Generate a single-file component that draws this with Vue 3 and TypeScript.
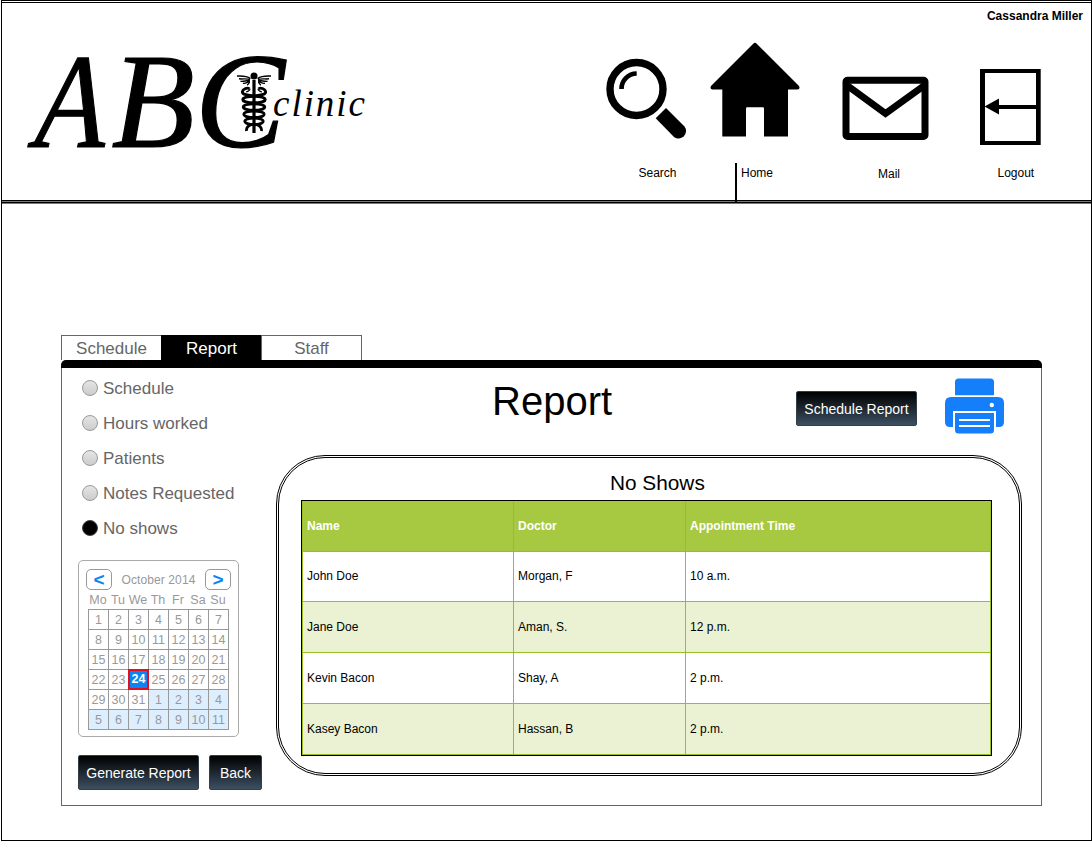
<script setup lang="ts">
import { ref } from 'vue'

interface Day { n: number; next: boolean }
interface Visit { name: string; doctor: string; time: string }

const tabs = ['Schedule', 'Report', 'Staff']
const activeTab = ref('Report')
const kinds = ['Schedule', 'Hours worked', 'Patients', 'Notes Requested', 'No shows']
const kind = ref('No shows')
const weekdays = ['Mo', 'Tu', 'We', 'Th', 'Fr', 'Sa', 'Su']
const days: Day[] = Array.from({ length: 42 }, (_, i) => ({
  n: i < 31 ? i + 1 : i - 30,
  next: i >= 31,
}))
const selected = ref(23)
const visits: Visit[] = [
  { name: 'John Doe', doctor: 'Morgan, F', time: '10 a.m.' },
  { name: 'Jane Doe', doctor: 'Aman, S.', time: '12 p.m.' },
  { name: 'Kevin Bacon', doctor: 'Shay, A', time: '2 p.m.' },
  { name: 'Kasey Bacon', doctor: 'Hassan, B', time: '2 p.m.' },
]
const coils = [
  { y: 99.5, r: 11.3 },
  { y: 107, r: 10.8 },
  { y: 114.3, r: 10.2 },
  { y: 121.3, r: 9.2 },
]
</script>

<template>
  <div class="page">
    <div class="frame">
      <header class="header">
        <svg class="logo" width="360" height="120" viewBox="20 40 360 120">
          <g class="serif">
            <g class="initials">
              <text transform="translate(34 147) skewX(-3) scale(.855 1)" font-size="135">A</text>
              <text transform="translate(111.500 147) scale(1.01 1)" font-size="135">B</text>
              <text transform="translate(195 147)" font-size="135">C</text>
            </g>
            <text x="273" y="115.5" font-size="37" textLength="92">clinic</text>
          </g>
          <circle cx="254" cy="76" r="3.5" />
          <path d="M254 80V133" stroke="#000" stroke-width="3.2" />
          <g fill="none" stroke="#000" stroke-width="1.4">
            <path d="M250.500 78.500C246 75.500 242 76.200 237 76M250 79.500C246 78.300 243 79.300 239 78.800M250 80.500C246 80 244 82 240.500 81.300M249.500 81.500C247.500 81.500 246 84 243 83.200M250 82C249 82 249 84.500 247 85" />
            <path d="M257.500 78.500C262 75.500 266 76.200 271 76M258 79.500C262 78.300 265 79.300 269 78.800M258 80.500C262 80 264 82 267.500 81.300M258.500 81.500C260.500 81.500 262 84 265 83.200M258 82C259 82 259 84.500 261 85" />
          </g>
          <g fill="none" stroke="#000" stroke-width="2.8">
            <path d="M249.500 88.800C247 87 242.500 89.500 242.300 91.800C242.500 95.500 250 95 254 96C258 95 265.500 95.500 265.700 91.800C265.500 89.500 261 87 258.500 88.800" />
            <path d="M246 92Q250 91 250 88.800M262 92Q258 91 258 88.800" stroke-width="1.200" />
            <ellipse v-for="c in coils" :key="c.y" cx="254" :cy="c.y" :rx="c.r" ry="3.200" />
            <path d="M252 124.500Q246 126 246.500 131M256 124.500Q262 126 261.500 131" />
          </g>
        </svg>

        <div class="right">
          <div class="user">Cassandra Miller</div>
          <nav class="nav">
            <a class="item search">
              <svg width="84" height="84" viewBox="604 57 84 84">
                <circle cx="636.500" cy="89" r="26.500" fill="none" stroke="#000" stroke-width="7.400" />
                <path d="M621.500 89A15.200 15.200 0 0 1 636.700 73.500" fill="none" stroke="#000" stroke-width="4.600" />
                <path d="M666 108L684.500 126.500A7.500 7.500 0 0 1 674 137L655.700 118.300Z" />
              </svg>
              <span>Search</span>
            </a>
            <a class="item home">
              <svg width="92" height="96" viewBox="709 42 92 96">
                <path d="M753.500 43.500Q755 42.200 756.500 43.500L799 86Q800.500 89.200 797.500 89.500H788V136.500H764V108.500Q764 107.300 763 107.300H747Q746 107.300 746 108.500V136.500H722.300V89.500H712.500Q709.500 89.200 711 86Z" />
              </svg>
              <span>Home</span>
            </a>
            <a class="item mail">
              <svg width="88" height="66" viewBox="841 76 88 66">
                <rect x="846" y="80.300" width="79" height="56.200" rx="1.500" fill="none" stroke="#000" stroke-width="7" />
                <path d="M846.500 85L885.500 113.500L925 85" fill="none" stroke="#000" stroke-width="7" />
              </svg>
              <span>Mail</span>
            </a>
            <a class="item logout">
              <svg width="62" height="78" viewBox="980 68 62 78">
                <path d="M980 69H1040.700V145H980ZM985 73V141H1036V73Z" fill-rule="evenodd" />
                <path d="M984.500 106.500L999 98.500V105H1037V109H999V114.500Z" />
              </svg>
              <span>Logout</span>
            </a>
          </nav>
        </div>
      </header>

      <main class="main">
        <div class="tabs">
          <button v-for="t in tabs" :key="t" class="tab" :class="{ active: t === activeTab }" @click="activeTab = t">{{ t }}</button>
        </div>
        <div class="bar"></div>
        <div class="panel">
          <aside class="side">
            <ul class="radios">
              <li v-for="k in kinds" :key="k" @click="kind = k">
                <i class="dot" :class="{ on: k === kind }"></i>{{ k }}
              </li>
            </ul>
            <div class="calendar">
              <div class="month">
                <button class="arrow">&lt;</button>
                <span>October 2014</span>
                <button class="arrow">&gt;</button>
              </div>
              <div class="week"><span v-for="w in weekdays" :key="w">{{ w }}</span></div>
              <div class="days">
                <span v-for="(d, i) in days" :key="i" :class="{ next: d.next, sel: i === selected }" @click="selected = i">{{ d.n }}</span>
              </div>
            </div>
            <div class="actions">
              <button class="btn wide">Generate Report</button>
              <button class="btn back">Back</button>
            </div>
          </aside>

          <section class="content">
            <div class="top">
              <h1>Report</h1>
              <button class="btn wide">Schedule Report</button>
              <svg class="printer" width="60" height="57" viewBox="945 378 60 57">
                <path d="M955 395.300V382Q955 378.500 958.500 378.500H990.500Q994 378.500 994 382V395.300Z" />
                <path fill-rule="evenodd" d="M951 397H998Q1004 397 1004 403V422Q1004 427 999 427H996V411H953V427H950Q945 427 945 422V403Q945 397 951 397ZM991.800 402.800A2.200 2.200 0 1 0 991.800 407.200A2.200 2.200 0 1 0 991.800 402.800Z" />
                <path fill-rule="evenodd" d="M955 413H994V430Q994 433.500 990.500 433.500H958.500Q955 433.500 955 430ZM959 419V421H990V419ZM959 425V427H990V425Z" />
              </svg>
            </div>
            <div class="card">
              <h2>No Shows</h2>
              <table>
                <colgroup><col class="c1" /><col class="c2" /><col class="c3" /></colgroup>
                <thead>
                  <tr><th>Name</th><th>Doctor</th><th>Appointment Time</th></tr>
                </thead>
                <tbody>
                  <tr v-for="v in visits" :key="v.name">
                    <td>{{ v.name }}</td><td>{{ v.doctor }}</td><td>{{ v.time }}</td>
                  </tr>
                </tbody>
              </table>
            </div>
          </section>
        </div>
      </main>
    </div>
  </div>
</template>

<style>
html, body { margin: 0; background: #fff; }
</style>

<style scoped>
* { box-sizing: border-box; }
button { font: inherit; margin: 0; padding: 0; }
.page { width: 1092px; height: 841px; padding-left: 1px; font-family: "Liberation Sans", Arial, sans-serif; color: #000; background: #fff; }
.frame { height: 841px; border: 1px solid #000; border-top: 3px double #000; }
.header { height: 201px; display: flex; justify-content: space-between; margin: 0 -1px; border: 1px solid #000; border-width: 0 1px; background: linear-gradient(#000, #000) 0 197px / 100% 1px no-repeat, linear-gradient(#777, #777) 0 198px / 100% 1px no-repeat, linear-gradient(#000, #000) 0 199px / 100% 1px no-repeat, linear-gradient(#777, #777) 0 200px / 100% 1px no-repeat; }
.logo { display: block; margin: 37px 0 0 18px; overflow: visible; }
.serif { font-family: "Liberation Serif", "Times New Roman", serif; font-style: italic; }
.initials { stroke: #000; stroke-width: 1.2px; }
.right { width: 488px; }
.user { height: 26px; padding: 5px 8px 0 0; text-align: right; font-size: 12px; line-height: 16px; font-weight: bold; }
.nav { display: flex; height: 175px; }
.item { display: flex; flex-direction: column; justify-content: space-between; }
.item svg { display: block; }
.item span { font-size: 12px; line-height: 16px; }
.search { width: 106px; padding: 28px 0 23px 1px; }
.search span { padding-left: 34.500px; }
.home { width: 132px; padding: 13px 0 2px; }
.home span { height: 39px; margin-left: 26px; padding: 2px 0 0 4px; border-left: 2px solid #000; }
.mail { width: 139px; padding: 47px 0 22px; }
.mail span { padding-left: 37px; }
.logout { width: 111px; padding: 39px 0 23px; }
.logout span { padding-left: 17.500px; }

.main { width: 981px; margin: 131px 0 0 59px; }
.tabs { display: flex; height: 25px; }
.tab { width: 100px; border: 1px solid #666; border-bottom: 0; border-right: 0; background: #fff; color: #666; font-size: 17px; line-height: 25px; }
.tab:last-child { width: 101px; border-right: 1px solid #666; }
.tab.active { background: #000; border-color: #000; color: #fff; }
.bar { height: 8px; background: #000; border-radius: 5px 5px 0 0; }
.panel { display: flex; height: 438px; border: 1px solid #666; border-top: 0; }
.side { width: 214px; padding: 3px 0 0 16px; }
.radios { list-style: none; margin: 0; padding: 0 0 0 3px; }
.radios li { display: flex; align-items: center; gap: 5.500px; height: 35px; color: #666; font-size: 17px; white-space: nowrap; }
.dot { width: 16px; height: 16px; margin: -1px 0 0 .5px; border-radius: 50%; border: 1px solid #999; background: linear-gradient(#e5e5e5, #ccc); }
.dot.on { background: #000; border-color: #444; }
.calendar { width: 161px; height: 177px; margin-top: 14px; padding: 8px 7px 6px; border: 1px solid #aaa; border-radius: 5px; color: #999; }
.month { display: flex; justify-content: space-between; align-items: center; height: 21px; font-size: 12px; letter-spacing: .1px; }
.arrow { width: 26px; height: 21px; border: 1px solid #999; border-radius: 5px; background: #fff; color: #0a84f4; font-family: "Liberation Sans", sans-serif; font-size: 19px; font-weight: bold; line-height: 17px; }
.week, .days { display: grid; grid-template-columns: repeat(7, 20px); text-align: center; font-size: 12.500px; }
.week { padding-left: 2px; line-height: 21px; height: 19px; }
.days { width: 141px; margin-left: 2px; border: 1px solid #999; border-width: 1px 0 0 1px; grid-auto-rows: 20px; line-height: 20px; }
.days span { border: 1px solid #999; border-width: 0 1px 1px 0; }
.days .next { background: #def; }
.days .sel { margin: -1px 0 0 -1px; border: 2px solid #e0101c; background: #0a84f4; color: #fff; font-weight: bold; line-height: 17px; }
.actions { display: flex; gap: 10px; margin-top: 18px; }
.btn { height: 35px; border: 1px solid #333f48; border-radius: 2px; background: linear-gradient(#000, #3c4f61); color: #fff; font-size: 14px; white-space: nowrap; }
.wide { width: 121px; flex: none; }
.back { width: 53px; }
.content { width: 746px; }
.top { display: flex; height: 87px; align-items: flex-start; }
h1 { width: 304px; margin: 10px 0 0 216px; font-size: 40px; line-height: 46px; font-weight: normal; }
.top .btn { margin-top: 23px; }
.printer { display: block; margin: 10px 0 0 28px; fill: #157efb; }
.card { height: 321px; border: 3px double #000; border-radius: 49px; padding: 12px 0 0 22px; }
h2 { margin: 0 0 0 309px; height: 30px; font-size: 20.800px; line-height: 25px; font-weight: normal; }
table { width: 691px; height: 256px; border: 1px solid #000; border-spacing: 0; table-layout: fixed; font-size: 12px; }
.c1 { width: 211px; }
.c2 { width: 172px; }
tr { height: 51px; }
th, td { padding: 0 4px; text-align: left; border: 1px solid #98bf21; border-width: 0 0 1px 1px; }
th:last-child, td:last-child { border-right-width: 1px; }
thead th { height: 51px; background: #a7c942; color: #fff; }
tbody tr:first-child { height: 50px; }
tbody td { padding-bottom: 1px; }
tbody tr:nth-child(even) { background: #eaf2d3; }
</style>
